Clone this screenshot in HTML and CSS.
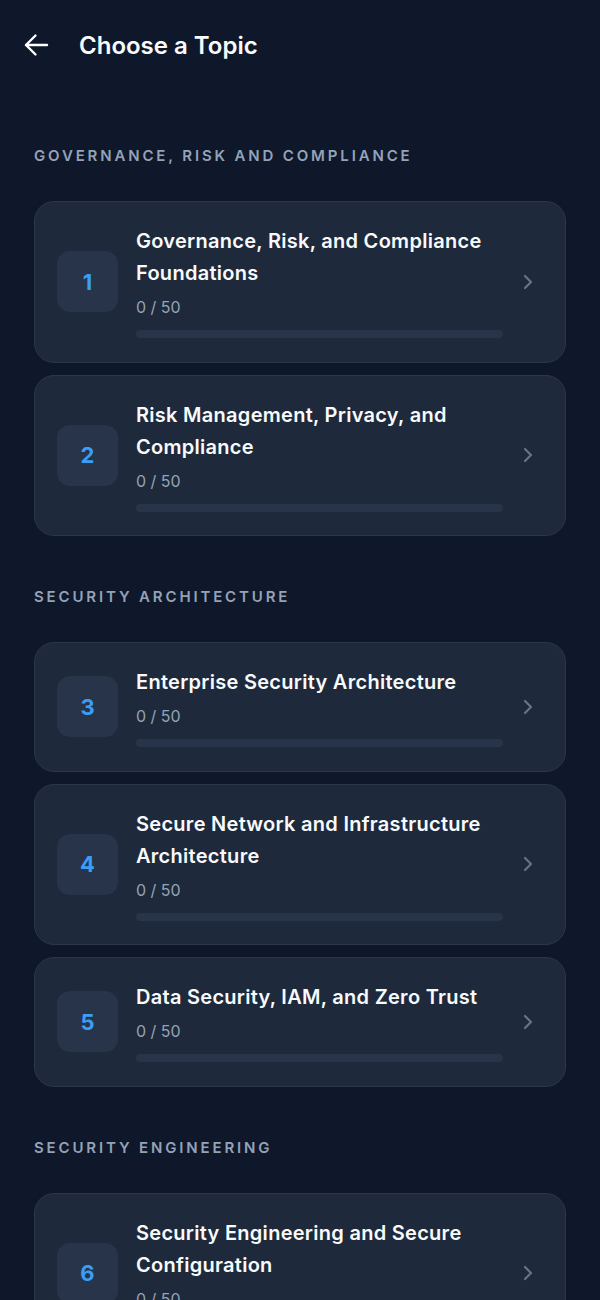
FILE: index.html
```html
<!DOCTYPE html>
<html lang="en">
<head>
    <meta charset="UTF-8">
    <title>Choose a Topic</title>
    <meta name="viewport" content="width=device-width, initial-scale=1">
    <link rel="stylesheet" href="styles.css">
</head>
<body>
<header class="top_bar">
    <button class="back" type="button" aria-label="Back">
        <svg width="28" height="28" viewBox="0 0 28 28" fill="none" stroke="#fff" stroke-width="2.4" stroke-linecap="round" stroke-linejoin="round">
            <path d="M24 14H3"/>
            <path d="M12.5 4.5L3 14l9.5 9.5"/>
        </svg>
    </button>
    <h1>Choose a Topic</h1>
</header>

<main class="content">
    <section class="group">
        <h2>Governance, Risk and Compliance</h2>
        <div class="topic">
            <div class="num">1</div>
            <div class="info">
                <div class="title">Governance, Risk, and Compliance Foundations</div>
                <div class="count">0 / 50</div>
                <div class="bar"><div class="fill" style="width: 0%"></div></div>
            </div>
            <svg class="chev" width="24" height="24" viewBox="0 0 24 24" fill="none" stroke="#64748b" stroke-width="2.2" stroke-linecap="round" stroke-linejoin="round"><path d="M9 6l6 6-6 6"/></svg>
        </div>
        <div class="topic">
            <div class="num">2</div>
            <div class="info">
                <div class="title">Risk Management, Privacy, and Compliance</div>
                <div class="count">0 / 50</div>
                <div class="bar"><div class="fill" style="width: 0%"></div></div>
            </div>
            <svg class="chev" width="24" height="24" viewBox="0 0 24 24" fill="none" stroke="#64748b" stroke-width="2.2" stroke-linecap="round" stroke-linejoin="round"><path d="M9 6l6 6-6 6"/></svg>
        </div>
    </section>

    <section class="group">
        <h2>Security Architecture</h2>
        <div class="topic">
            <div class="num">3</div>
            <div class="info">
                <div class="title">Enterprise Security Architecture</div>
                <div class="count">0 / 50</div>
                <div class="bar"><div class="fill" style="width: 0%"></div></div>
            </div>
            <svg class="chev" width="24" height="24" viewBox="0 0 24 24" fill="none" stroke="#64748b" stroke-width="2.2" stroke-linecap="round" stroke-linejoin="round"><path d="M9 6l6 6-6 6"/></svg>
        </div>
        <div class="topic">
            <div class="num">4</div>
            <div class="info">
                <div class="title">Secure Network and Infrastructure Architecture</div>
                <div class="count">0 / 50</div>
                <div class="bar"><div class="fill" style="width: 0%"></div></div>
            </div>
            <svg class="chev" width="24" height="24" viewBox="0 0 24 24" fill="none" stroke="#64748b" stroke-width="2.2" stroke-linecap="round" stroke-linejoin="round"><path d="M9 6l6 6-6 6"/></svg>
        </div>
        <div class="topic">
            <div class="num">5</div>
            <div class="info">
                <div class="title">Data Security, IAM, and Zero Trust</div>
                <div class="count">0 / 50</div>
                <div class="bar"><div class="fill" style="width: 0%"></div></div>
            </div>
            <svg class="chev" width="24" height="24" viewBox="0 0 24 24" fill="none" stroke="#64748b" stroke-width="2.2" stroke-linecap="round" stroke-linejoin="round"><path d="M9 6l6 6-6 6"/></svg>
        </div>
    </section>

    <section class="group">
        <h2>Security Engineering</h2>
        <div class="topic">
            <div class="num">6</div>
            <div class="info">
                <div class="title">Security Engineering and Secure Configuration</div>
                <div class="count">0 / 50</div>
                <div class="bar"><div class="fill" style="width: 0%"></div></div>
            </div>
            <svg class="chev" width="24" height="24" viewBox="0 0 24 24" fill="none" stroke="#64748b" stroke-width="2.2" stroke-linecap="round" stroke-linejoin="round"><path d="M9 6l6 6-6 6"/></svg>
        </div>
    </section>
</main>
</body>
</html>
```

FILE: styles.css
```css
body {
    margin: 0;
    background-color: #0f172a;
    color: #f8fafc;
    font-family: Inter, "Noto Sans", sans-serif;
}

.top_bar {
    display: flex;
    align-items: center;
    height: 90px;
    padding-left: 23px;
}

.back {
    display: flex;
    background: none;
    border: 0;
    padding: 0;
    margin-right: 28px;
    cursor: pointer;
}

.top_bar h1 {
    margin: 0;
    font-size: 24px;
    font-weight: 600;
}

.content {
    padding: 56px 34px 40px;
}

.group {
    margin-bottom: 51px;
}

.group h2 {
    margin: 0 0 35px;
    font-size: 15px;
    line-height: 20px;
    font-weight: 600;
    letter-spacing: 2.85px;
    text-transform: uppercase;
    color: #94a3b8;
}

.topic {
    display: flex;
    align-items: center;
    background-color: #1e293b;
    border: 1px solid #2b3649;
    border-radius: 20px;
    padding: 23px 25px 23.5px 22px;
    margin-bottom: 12px;
    cursor: pointer;
}

.num {
    flex: none;
    width: 61px;
    height: 61px;
    border-radius: 13px;
    background-color: #273449;
    color: #3b9ef5;
    font-size: 22px;
    font-weight: 700;
    display: flex;
    align-items: center;
    justify-content: center;
    margin-right: 18px;
}

.info {
    flex: 1;
    min-width: 0;
}

.title {
    font-size: 20px;
    line-height: 32px;
    font-weight: 600;
    letter-spacing: 0.28px;
    color: #f8fafc;
}

.count {
    margin-top: 6px;
    font-size: 16px;
    line-height: 24px;
    color: #94a3b8;
}

.bar {
    margin-top: 11px;
    height: 8px;
    border-radius: 4px;
    background-color: #273449;
    overflow: hidden;
}

.fill {
    height: 100%;
    background-color: #3b9ef5;
}

.chev {
    flex: none;
    margin-left: 13px;
}
```
